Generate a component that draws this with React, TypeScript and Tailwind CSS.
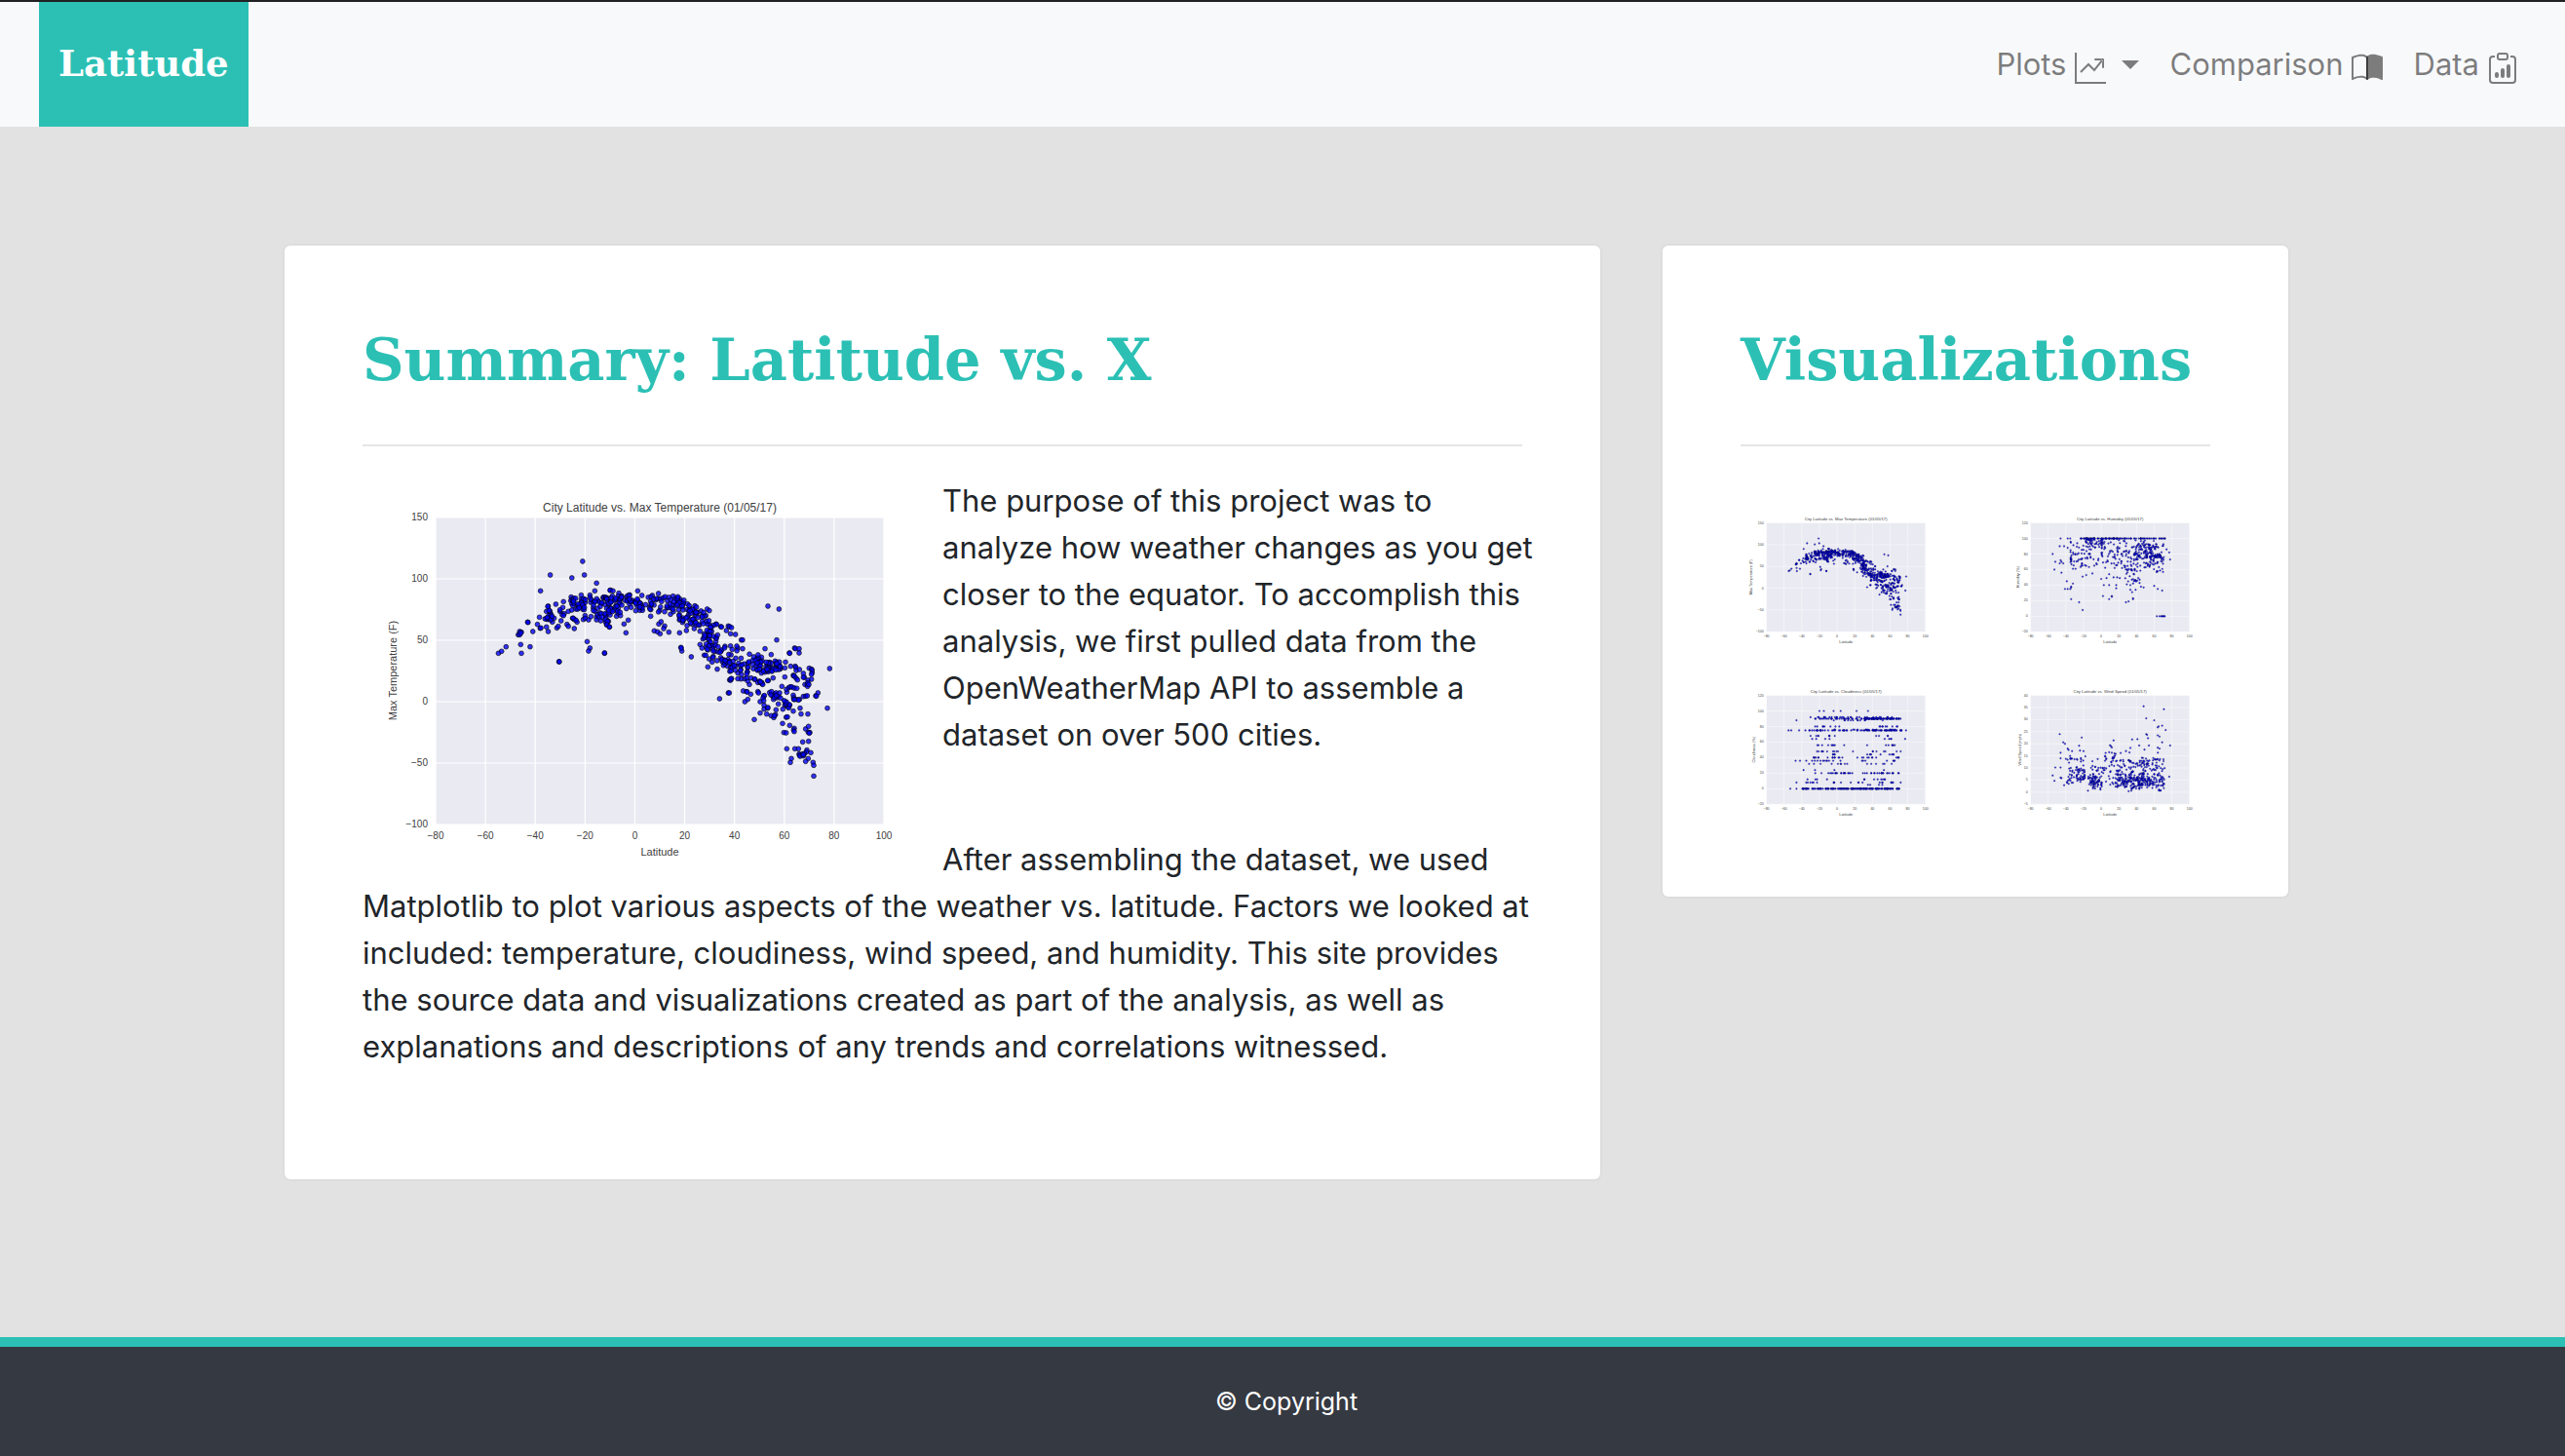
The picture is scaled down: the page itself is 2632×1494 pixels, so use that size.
import type { ReactNode } from "react";

type Point = [number, number];

/* ---------- seeded random numbers, so that the plots are stable ---------- */

function makeRandom(seed: number) {
  let s = seed;
  return () => {
    s = (s * 1664525 + 1013904223) % 4294967296;
    return s / 4294967296;
  };
}

/* ---------- plot geometry, in viewBox units ---------- */

const LEFT = 75;
const RIGHT = 535;
const TOP = 41;
const BOTTOM = 356;

function parse(list: string, scaleX: number, scaleY: number, dx: number, dy: number): Point[] {
  return list
    .trim()
    .split(/\s+/)
    .map((pair) => {
      const [x, y] = pair.split(",").map(Number);
      return [x / scaleX + dx, y / scaleY + dy];
    });
}

const SOUTH = `
396,544 405,538 418,524 460,517 462,544 487,524 480,448 481,449 495,477 457,477 462,479 453,487 457,487 460,482
508,455 514,433 516,467 518,466 517,352 545,303 607,312 638,261 643,303 678,328 570,570 571,570 651,508 659,528
655,537 701,544 534,463 539,477 539,399 538,400 534,415 545,420 547,425 541,428 546,432 548,436 534,438 538,440
545,440 541,436 530,438 551,448 556,436 561,393 564,466 568,461 573,415 576,444 579,425 581,403 583,385 573,410
585,422 593,455 597,461 597,415 583,428 605,371 607,378 604,382 609,382 613,375 618,375 607,392 610,397 607,411
613,390 619,408 624,397 628,399 624,408 609,436 614,440 622,448 614,468 611,436 619,442 634,365 634,378 637,384
640,390 632,392 640,399 638,408 642,410 643,378 645,388 640,376 646,379 634,388 638,395 640,440 645,428 646,436
655,441 659,365 659,372 661,387 663,379 662,431 670,385 673,352 674,415 678,432 678,441 681,425 686,432 688,420
690,444 692,390 692,422 694,432 697,372 698,374 700,371 705,425 707,456 704,448 710,444 712,446 715,463 718,350
704,375 708,374 705,435 643,403 625,392 612,384 628,404 544,414 547,441 536,434 550,430 541,412
`;

const NORTH = `
18,50 27,52 45,59 103,52 116,66 167,60 78,64 70,70 5,72 12,76 3,122 18,126 38,130 50,128 42,120 4,140 10,146 8,156
16,163 1,243 61,154 74,142 67,181 148,66 143,130 154,175 164,178 172,184 168,154 175,147 186,160 183,168 199,179
232,181 241,149 255,159 253,174 236,226 239,237 237,228 268,255 295,217 301,228 308,250 277,168 270,154 280,148
212,68 204,124 213,116 219,76 226,74 232,76 238,84 243,88 256,92 264,106 279,98 317,108 298,114 313,128
504,99 538,108 531,203 495,230 514,248 570,243 571,244 586,228 589,230 600,230 600,243 694,291 687,413 658,366
651,375 653,376 355,384 382,366 385,366 386,326 392,322 319,286 348,293 380,284 389,288 344,154 346,155 359,162
361,163 382,160 386,162 392,165 376,174 389,184 404,186 422,203 426,203 411,228 426,230 408,222 336,158 330,164
447,340 452,320 463,324 462,448 433,393 442,386 451,370 428,360 438,362 440,363 473,362 475,366 480,393 480,428
491,376 493,374 489,382 491,390 492,404 492,416 503,413 504,411 500,431 514,436 509,365 515,362 519,376 521,386
525,370 529,366 531,381 537,377 540,366 543,382 524,380 530,374 536,400 529,418 527,433 522,442 524,436 513,372
557,393 556,404 550,416 561,403 566,410 571,404 568,412 570,402 559,400 561,394 554,390 562,364 561,355 547,346
568,350 573,347 578,348 585,351 593,352 582,373 583,381 584,386 591,386 601,386 598,388 613,377 620,376 625,375
585,386 582,422 603,413 606,431 627,431 560,441 564,440 549,460 571,466 585,475 583,480 585,485 553,488 560,489
620,477 629,469 628,487 633,488 631,490 611,517 629,515 562,538 587,538 598,538 600,554 601,558 603,561 613,560
624,542 622,548 636,550 616,553 611,554 628,568 620,577 613,556 576,568 573,580 643,580 645,589 645,622 558,271
556,289 556,317 531,271 574,284 588,284 590,288 582,312 584,314 585,314 591,321 595,326 591,297 601,294 613,306
616,318 613,318 631,290 638,293 640,296 640,304 638,309 638,324 627,327 618,340 625,340 626,346 627,335 630,340
543,291 540,282 540,293 529,280 520,320 505,328 503,328 485,334 486,338 478,330 473,334 464,324 526,268 524,290
538,284 475,258 478,268 484,256 484,305 495,302 490,296 480,334 488,340 481,332
`;

/* Dense parts of the temperature curve: x, y, half-thickness, number of cities. */
const BAND: [number, number, number, number][] = [
  [246, 130, 7, 18],
  [262, 130, 9, 34],
  [282, 129, 9, 26],
  [303, 130, 8, 22],
  [320, 129, 7, 24],
  [334, 139, 8, 22],
  [346, 144, 9, 24],
  [355, 161, 8, 20],
  [362, 176, 14, 30],
  [376, 183, 11, 18],
  [386, 199, 10, 26],
  [397, 187, 6, 14],
  [410, 193, 6, 26],
  [424, 194, 5, 12],
];

function temperaturePoints(): Point[] {
  const random = makeRandom(11);
  const points = [...parse(SOUTH, 2.8, 3, -2, -1), ...parse(NORTH, 3, 3, 248, 99)];
  for (const [x, y, half, count] of BAND) {
    for (let i = 0; i < count; i++) {
      const dy = (random() * 2 - 1) * half;
      points.push([x + (random() - 0.5) * 20, y + dy]);
    }
  }
  return points;
}

function toPlot(lat: number, value: number, min: number, max: number): Point {
  return [
    LEFT + ((lat + 80) / 180) * (RIGHT - LEFT),
    BOTTOM - ((value - min) / (max - min)) * (BOTTOM - TOP),
  ];
}

const range = (r: () => number, a: number, b: number) => a + (b - a) * r();

function humidityPoints(): Point[] {
  const r = makeRandom(5);
  const out: Point[] = [];
  const add = (lat: number, v: number) => out.push(toPlot(lat, v, -20, 120));
  const single: Point[] = [
    [-55, 80], [-53, 60], [-52, 70], [-47, 90], [-42, 90], [-46, 100], [-46, 72], [-47, 68], [-43, 68], [-45, 70],
    [-45, 56], [-39, 45], [-38, 88], [-38, 100], [-35, 100], [-32, 42], [-41, 35], [-38, 35], [-35, 35], [-34, 37],
    [-34, 38], [-34, 22], [-25, 18], [-21, 8], [-21, 51], [-17, 53], [-10, 55], [-32, 61], [-29, 61], [0, 48],
    [2, 26], [3, 40], [6, 49], [9, 54], [9, 40], [9, 22], [12, 26], [12, 25], [14, 50], [18, 50], [17, 40], [17, 36],
    [21, 49], [28, 18], [31, 19], [36, 23], [36, 22], [33, 34], [35, 31], [39, 34], [33, 40], [29, 41], [45, 38],
    [48, 37], [60, 39], [64, 35], [69, 33], [63, 0], [66, 0], [68, 0], [69, 0], [70, 0], [71, 0], [72, 0], [77, 82],
    [78, 73], [74, 86], [63, 58], [70, 57],
  ];
  single.forEach(([a, b]) => add(a, b));
  for (let i = 0; i < 40; i++) add(range(r, -25, 10), 100);
  for (let i = 0; i < 60; i++) add(range(r, 8, 73), 100);
  for (let i = 0; i < 14; i++) add(range(r, -35, -33), range(r, 64, 98));
  for (let i = 0; i < 70; i++) add(range(r, -32, 5), range(r, 62, 99));
  for (let i = 0; i < 40; i++) add(range(r, -18, 2), range(r, 88, 100));
  for (let i = 0; i < 60; i++) add(range(r, 5, 35), range(r, 60, 98));
  for (let i = 0; i < 60; i++) add(range(r, 27, 45), range(r, 42, 92));
  for (let i = 0; i < 70; i++) add(range(r, 38, 60), range(r, 62, 98));
  for (let i = 0; i < 40; i++) add(range(r, 49, 58), range(r, 74, 93));
  for (let i = 0; i < 45; i++) add(range(r, 55, 71), range(r, 56, 93));
  for (let i = 0; i < 20; i++) add(range(r, 58, 69), range(r, 75, 79));
  return out;
}

function cloudinessPoints(): Point[] {
  const r = makeRandom(21);
  const out: Point[] = [];
  const row = (value: number, from: number, to: number, count: number) => {
    for (let i = 0; i < count; i++) out.push(toPlot(range(r, from, to), value, -20, 120));
  };
  [-20, -15, -4, 4, 22, 35].forEach((lat) => out.push(toPlot(lat, 100, -20, 120)));
  [-55, -52, -43, 78].forEach((lat) => out.push(toPlot(lat, 75, -20, 120)));
  [-47, -42].forEach((lat) => out.push(toPlot(lat, 36, -20, 120)));
  [-53, -46].forEach((lat) => out.push(toPlot(lat, 0, -20, 120)));
  [-38, -25, -3, 53].forEach((lat) => out.push(toPlot(lat, 24, -20, 120)));
  [[-46, 88], [77, 64], [72, 48], [18, 48], [8, 56], [34, 56], [-46, 8], [72, 8]].forEach(([lat, v]) =>
    out.push(toPlot(lat, v, -20, 120)),
  );
  row(92, -34, 70, 28);
  row(90, -25, 30, 30);
  row(90, 30, 72, 75);
  row(88, -6, 55, 12);
  row(80, -36, 4, 8);
  row(80, 48, 72, 9);
  row(75, -36, 40, 38);
  row(75, 40, 73, 34);
  row(76, -12, 72, 14);
  row(68, -35, 5, 8);
  row(68, 40, 65, 4);
  row(64, -35, -8, 4);
  row(64, 48, 62, 4);
  row(56, -28, 4, 8);
  row(56, 55, 70, 6);
  row(48, -28, 2, 10);
  row(48, 40, 68, 6);
  row(44, -8, 0, 4);
  row(44, 34, 68, 9);
  row(40, -30, 6, 14);
  row(40, 22, 45, 8);
  row(40, 60, 70, 4);
  row(36, -36, 5, 12);
  row(36, 25, 66, 7);
  row(32, -32, 12, 9);
  row(32, 26, 66, 6);
  row(20, -26, 26, 20);
  row(20, 29, 70, 22);
  row(12, -34, -10, 4);
  row(12, 26, 64, 8);
  row(8, -36, 38, 14);
  row(8, 48, 70, 7);
  row(5, 20, 70, 4);
  row(0, -42, 0, 46);
  row(0, 0, 72, 110);
  return out;
}

function windPoints(): Point[] {
  const r = makeRandom(33);
  const out: Point[] = [];
  const add = (lat: number, v: number) => out.push(toPlot(lat, v, -5, 40));
  const single: Point[] = [
    [48, 35.5], [71, 34.3], [51, 30.5], [60, 29.7], [65, 27.2], [64, 26.8], [69, 27.5], [73, 25.7], [51, 24], [52, 23.7],
    [64, 23.5], [66, 23], [53, 22.3], [41, 21.9], [35, 21.8], [69, 20.6], [78, 19.3], [77, 6.4], [14, 21.4], [-22, 22.6],
    [-47, 24], [-43, 20.6], [-41, 20], [-25, 19.2], [-46, 16.3], [-46, 14], [-46, 10.2], [-52, 10.2], [-55, 6.9],
    [-53, 4.7], [-46, 6], [-45, 5.8], [-42, 2.9], [-40, 13.8], [-38, 18], [-37, 17.5], [-33, 17], [-24, 17.2],
    [-20, 17], [10, 19.4], [11, 19], [12, 18.5], [33, 18.3], [43, 19.3], [54, 19.3], [49, 17.6], [64, 18.4], [66, 18],
    [9, 16.5], [12, 16.3], [15, 16], [22, 16.2], [28, 17], [32, 16.4], [5, 16.2], [-18, 14.8], [-10, 12.8], [-4, 13.7],
    [67, 0.6], [31, 0.4], [34, 0.6], [-15, 0.6],
  ];
  single.forEach(([a, b]) => add(a, b));
  for (let i = 0; i < 50; i++) add(range(r, -39, -18), range(r, 2.5, 15));
  for (let i = 0; i < 30; i++) add(range(r, -28, -18), range(r, 5, 10));
  for (let i = 0; i < 70; i++) add(range(r, -15, 1), 4.6 + (r() + r() - 1) * 3.8);
  for (let i = 0; i < 16; i++) add(range(r, -12, 4), range(r, 7, 11));
  for (let i = 0; i < 35; i++) add(range(r, 2, 18), range(r, 3, 16));
  for (let i = 0; i < 110; i++) add(range(r, 16, 46), 4.4 + (r() + r() - 1) * 4);
  for (let i = 0; i < 80; i++) add(range(r, 18, 50), range(r, 4, 13.5));
  for (let i = 0; i < 80; i++) add(range(r, 42, 73), 4.2 + (r() + r() - 1) * 3.6);
  for (let i = 0; i < 60; i++) add(range(r, 46, 64), range(r, 4, 14.5));
  for (let i = 0; i < 18; i++) add(range(r, 58, 72), range(r, 7, 17));
  return out;
}

type Plot = {
  title: string;
  label: string;
  labelX: number;
  ticks: number[];
  points: Point[];
};

const plots: Plot[] = [
  {
    title: "City Latitude vs. Max Temperature (01/05/17)",
    label: "Max Temperature (F)",
    labelX: 35,
    ticks: [-100, -50, 0, 50, 100, 150],
    points: temperaturePoints(),
  },
  {
    title: "City Latitude vs. Humidity (01/05/17)",
    label: "Humidity (%)",
    labelX: 41,
    ticks: [-20, 0, 20, 40, 60, 80, 100, 120],
    points: humidityPoints(),
  },
  {
    title: "City Latitude vs. Cloudiness (01/05/17)",
    label: "Cloudiness (%)",
    labelX: 41,
    ticks: [-20, 0, 20, 40, 60, 80, 100, 120],
    points: cloudinessPoints(),
  },
  {
    title: "City Latitude vs. Wind Speed (01/05/17)",
    label: "Wind Speed (mph)",
    labelX: 47,
    ticks: [-5, 0, 5, 10, 15, 20, 25, 30, 35, 40],
    points: windPoints(),
  },
];

const latitudes = [-80, -60, -40, -20, 0, 20, 40, 60, 80, 100];
const sign = (n: number) => String(n).replace("-", "−");

function ScatterPlot({ plot }: { plot: Plot }) {
  const min = plot.ticks[0];
  const max = plot.ticks[plot.ticks.length - 1];
  return (
    <svg
      viewBox="0 0 595 397"
      role="img"
      aria-label={plot.title}
      className="block h-auto w-full font-['Liberation_Sans',sans-serif]"
    >
      <rect x={LEFT} y={TOP} width={RIGHT - LEFT} height={BOTTOM - TOP} fill="#eaeaf2" />
      <g stroke="#ffffff" strokeWidth="1.2">
        {latitudes.map((lat) => {
          const [x] = toPlot(lat, min, min, max);
          return <line key={lat} x1={x} x2={x} y1={TOP} y2={BOTTOM} />;
        })}
        {plot.ticks.map((tick) => {
          const [, y] = toPlot(0, tick, min, max);
          return <line key={tick} x1={LEFT} x2={RIGHT} y1={y} y2={y} />;
        })}
      </g>
      <g fill="#0000ff" fillOpacity="0.8" stroke="#000000" strokeOpacity="0.8" strokeWidth="0.8">
        {plot.points.map(([x, y], i) => (
          <circle key={i} cx={x} cy={y} r="2.4" />
        ))}
      </g>
      <g fill="#404040" fontSize="10">
        {latitudes.map((lat) => {
          const [x] = toPlot(lat, min, min, max);
          return (
            <text key={lat} x={x} y="371" textAnchor="middle">
              {sign(lat)}
            </text>
          );
        })}
        {plot.ticks.map((tick) => {
          const [, y] = toPlot(0, tick, min, max);
          return (
            <text key={tick} x="67" y={y + 3} textAnchor="end">
              {sign(tick)}
            </text>
          );
        })}
      </g>
      <g fill="#404040" textAnchor="middle">
        <text x="305" y="35" fontSize="12">
          {plot.title}
        </text>
        <text x="305" y="388" fontSize="11">
          Latitude
        </text>
        <text fontSize="11" transform={`translate(${plot.labelX} 198) rotate(-90)`}>
          {plot.label}
        </text>
      </g>
    </svg>
  );
}

/* ---------- icons ---------- */

function Icon({ children }: { children: ReactNode }) {
  return (
    <svg viewBox="0 0 16 16" fill="currentColor" aria-hidden="true" className="mt-2 size-8 shrink-0">
      {children}
    </svg>
  );
}

function GraphIcon() {
  return (
    <Icon>
      <path d="M0 0h1v15h15v1H0V0z" />
      <path
        fillRule="evenodd"
        d="M14.39 4.312L10.041 9.75 7 6.707l-3.646 3.647-.708-.708L7 5.293 9.959 8.25l3.65-4.563.781.624z M10 3.5a.5.5 0 0 1 .5-.5h4a.5.5 0 0 1 .5.5v4a.5.5 0 0 1-1 0V4h-3.5a.5.5 0 0 1-.5-.5z"
      />
    </Icon>
  );
}

function BookIcon() {
  return (
    <Icon>
      <path
        fillRule="evenodd"
        d="M3.214 1.072C4.813.752 6.916.71 8.354 2.146A.5.5 0 0 1 8.5 2.5v11a.5.5 0 0 1-.854.354c-.843-.844-2.115-1.059-3.47-.92-1.344.14-2.66.617-3.452 1.013A.5.5 0 0 1 0 13.5v-11a.5.5 0 0 1 .276-.447c.9-.45 1.9-.78 2.938-.981zM1 2.82v9.908c.846-.343 1.944-.672 3.074-.788 1.143-.118 2.387-.023 3.426.56V2.718c-1.063-.929-2.631-.956-4.09-.664A11.958 11.958 0 0 0 1 2.82z"
      />
      <path d="M12.786 1.072C11.188.752 9.084.71 7.646 2.146A.5.5 0 0 0 7.5 2.5v11a.5.5 0 0 0 .854.354c.843-.844 2.115-1.059 3.47-.92 1.344.14 2.66.617 3.452 1.013A.5.5 0 0 0 16 13.5v-11a.5.5 0 0 0-.276-.447c-.9-.45-1.9-.78-2.938-.981z" />
    </Icon>
  );
}

function ClipboardIcon() {
  return (
    <Icon>
      <path
        fillRule="evenodd"
        d="M4 1.5H3a2 2 0 0 0-2 2V14a2 2 0 0 0 2 2h10a2 2 0 0 0 2-2V3.5a2 2 0 0 0-2-2h-1v1h1a1 1 0 0 1 1 1V14a1 1 0 0 1-1 1H3a1 1 0 0 1-1-1V3.5a1 1 0 0 1 1-1h1v-1z"
      />
      <path
        fillRule="evenodd"
        d="M9.5 1h-3a.5.5 0 0 0-.5.5v1a.5.5 0 0 0 .5.5h3a.5.5 0 0 0 .5-.5v-1a.5.5 0 0 0-.5-.5zm-3-1A1.5 1.5 0 0 0 5 1.5v1A1.5 1.5 0 0 0 6.5 4h3A1.5 1.5 0 0 0 11 2.5v-1A1.5 1.5 0 0 0 9.5 0h-3z"
      />
      <path d="M4 11a1 1 0 1 1 2 0v1a1 1 0 1 1-2 0v-1zm6-4a1 1 0 1 1 2 0v5a1 1 0 1 1-2 0V7zM7 9a1 1 0 0 1 2 0v3a1 1 0 1 1-2 0V9z" />
    </Icon>
  );
}

/* ---------- page ---------- */

function Card({ title, children }: { title: string; children: ReactNode }) {
  return (
    <section className="rounded-lg border-2 border-black/[0.02] bg-white bg-clip-padding p-20">
      <h2 className="font-['DejaVu_Serif',serif] text-[59px] leading-[76px] font-bold whitespace-nowrap text-[#2cc0b5]">
        {title}
      </h2>
      <hr className="mt-12 mb-8 border-t-2 border-black/10" />
      {children}
    </section>
  );
}

export default function App() {
  return (
    <div className="flex min-h-screen flex-col border-t-2 border-[#212124] bg-[#e2e2e2] font-[Inter,sans-serif] text-[#212529]">
      <nav className="flex h-32 items-stretch justify-between bg-[#f8f9fb] pr-8 pl-10">
        <a
          href="#"
          className="flex items-center bg-[#2cc0b5] px-5 font-['DejaVu_Serif',serif] text-[37px] font-bold text-white"
        >
          Latitude
        </a>
        <ul className="flex items-center text-[31px] leading-[48px] text-black/50">
          <li>
            <button type="button" className="flex items-center gap-2 px-4">
              Plots
              <GraphIcon />
              <span className="mr-4 ml-2 border-x-9 border-t-9 border-x-transparent border-t-current" />
            </button>
          </li>
          <li>
            <a href="#comparison" className="flex items-center gap-2 pr-4">
              Comparison
              <BookIcon />
            </a>
          </li>
          <li>
            <a href="#data" className="flex items-center gap-2 px-4">
              Data
              <ClipboardIcon />
            </a>
          </li>
        </ul>
      </nav>

      <main className="grid grow grid-cols-[1354fr_646fr] items-start gap-[60px] pt-[120px] pr-[282px] pb-40 pl-[290px]">
        <Card title="Summary: Latitude vs. X">
          <div className="-mr-3 flow-root text-[31px] leading-[48px]">
            <div className="float-left w-[595px]">
              <ScatterPlot plot={plots[0]} />
            </div>
            <p className="mb-20">
              The purpose of this project was to analyze how weather changes as you get closer to the equator. To
              accomplish this analysis, we first pulled data from the OpenWeatherMap API to assemble a dataset on over
              500 cities.
            </p>
            <p className="mb-8">
              After assembling the dataset, we used Matplotlib to plot various aspects of the weather vs. latitude.
              Factors we looked at included: temperature, cloudiness, wind speed, and humidity. This site provides the
              source data and visualizations created as part of the analysis, as well as explanations and descriptions
              of any trends and correlations witnessed.
            </p>
          </div>
        </Card>

        <Card title="Visualizations">
          <div className="grid grid-cols-2 gap-x-[60px] gap-y-9 pt-8">
            {plots.map((plot) => (
              <a key={plot.title} href="#plot" aria-label={plot.title}>
                <ScatterPlot plot={plot} />
              </a>
            ))}
          </div>
        </Card>
      </main>

      <footer className="border-t-10 border-[#2cc0b5] bg-[#353941] pt-8 pb-8 pl-2 text-center text-[25px] leading-[48px] text-white">
        © Copyright
      </footer>
    </div>
  );
}
